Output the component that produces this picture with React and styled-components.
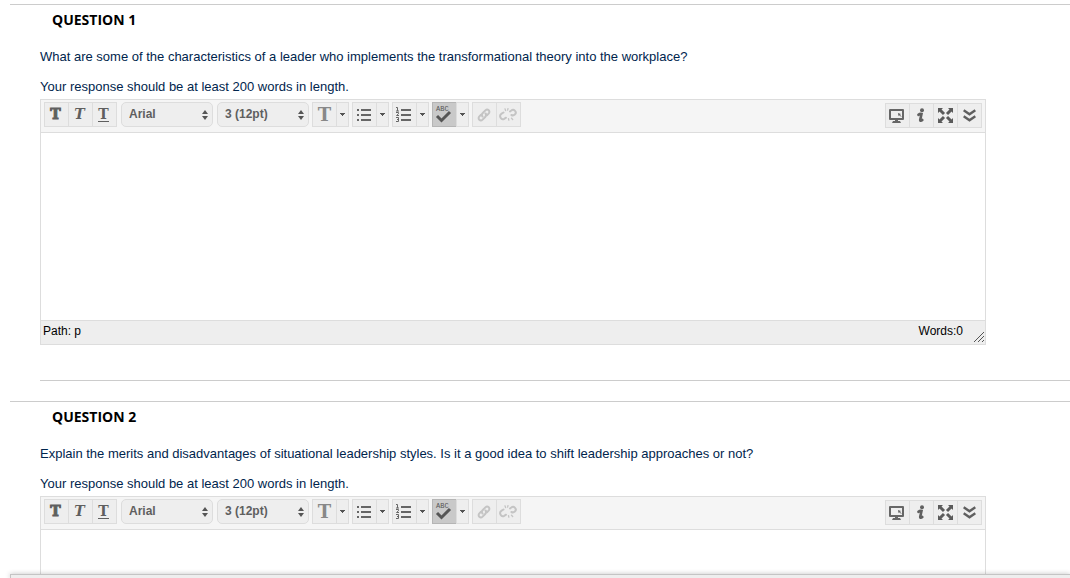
import React, { useState } from 'react';
import styled, { createGlobalStyle } from 'styled-components';

const GlobalStyle = createGlobalStyle`
    * {
        box-sizing: border-box;
    }

    html, body {
        margin: 0;
        height: 100%;
        overflow: hidden;
        background: #FFFFFF;
    }

    body {
        font-family: "Liberation Sans", Arial, sans-serif;
        font-size: 13px;
        color: #00254D;
    }
`

const questions = [
  {
    id: 1,
    text: 'What are some of the characteristics of a leader who implements the transformational theory into the workplace?',
  },
  {
    id: 2,
    text: 'Explain the merits and disadvantages of situational leadership styles. Is it a good idea to shift leadership approaches or not?',
  },
];

const hint = 'Your response should be at least 200 words in length.';

const Caret = () => (
  <svg width="5" height="3" viewBox="0 0 5 3">
    <path d="M0 0h5v1h-1v1h-1v1h-1v-1h-1v-1h-1z" fill="#555555" />
  </svg>
);

const BulletIcon = () => (
  <svg width="14" height="13" viewBox="0 0 14 13" fill="#666666">
    <path d="M0 1h2v2H0zM0 6h2v2H0zM0 11h2v2H0zM4 1h10v2H4zM4 6h10v2H4zM4 11h10v2H4z" />
  </svg>
);

const NumberIcon = () => (
  <svg width="15" height="15" viewBox="0 0 15 15" fill="none" stroke="#666666">
    <path d="M5 3h10M5 8h10M5 13h10" strokeWidth="2" />
    <path d="M0 .5h1.5V4M0 4h3M0 5.5h2.500v1.200L.5 8.500H3M0 10.500h2.500v4H0M1 12.500h1.500" strokeWidth="1" />
  </svg>
);

const SpellIcon = () => (
  <svg width="17" height="19" viewBox="0 0 17 19">
    <text x="1" y="6" fontFamily="Liberation Mono, monospace" fontSize="7" fill="#555555">ABC</text>
    <path d="M2 11l4.500 4.500L15 7" fill="none" stroke="#555555" strokeWidth="3" />
  </svg>
);

const LinkIcon = () => (
  <svg width="14" height="14" viewBox="0 0 14 14" fill="none" stroke="#C4C4C4" strokeWidth="2" strokeLinecap="round">
    <path d="M5.500 8.500C4.600 7.400 4.800 6 5.800 5l2.600-2.600c1-1 2.400-1 3.300-.1s.9 2.300-.1 3.300L10 7.200" />
    <path d="M8.500 5.500c.9 1.100.7 2.500-.3 3.500l-2.600 2.600c-1 1-2.400 1-3.300.1s-.9-2.300.1-3.300L4 6.800" />
  </svg>
);

const UnlinkIcon = () => (
  <svg width="18" height="14" viewBox="0 0 18 14" fill="none" stroke="#C4C4C4" strokeWidth="2" strokeLinecap="round">
    <path d="M4.500 4.500L2.600 5.700C1.200 6.600.8 8.400 1.600 9.800s2.300 1.700 3.600 1L7 9.700" />
    <path d="M11 3.500l1.300-1c1.100-.9 2.700-.8 3.700.3s.9 2.800-.2 3.800c-.9.8-2.200 1-3.400.4" />
    <path d="M6 .8l.6 1.800M9 .6l-.4 1.600M9.500 10.600l.3 1.600M12.500 10.300l1.200 1.200" strokeWidth="1.300" />
  </svg>
);

const MonitorIcon = () => (
  <svg width="15" height="14" viewBox="0 0 15 14">
    <path d="M1 1h13v9H1z" fill="none" stroke="#666666" strokeWidth="2" strokeLinejoin="round" />
    <path d="M9 4l3 1-1 .7 1.500 1.800V8L10 6.300l-.6.9zM6 10h3v2h2l1 2H3l1-2h2z" fill="#666666" />
  </svg>
);

const InfoIcon = () => (
  <svg width="8" height="15" viewBox="0 0 8 15">
    <circle cx="5" cy="2.200" r="2" fill="#606060" />
    <path d="M1.500 6.800c1-.9 2-1.200 3-.9L3.200 12c0 1.200 1 .9 2.100 0" fill="none" stroke="#606060" strokeWidth="2.600" strokeLinecap="round" />
  </svg>
);

const ExpandIcon = () => (
  <svg width="15" height="15" viewBox="0 0 15 15">
    <path d="M0 0h5L0 5zM15 0v5l-5-5zM0 15v-5l5 5zM15 15h-5l5-5z" fill="#5A5A5A" />
    <path d="M2 2l4 4M13 2L9 6M2 13l4-4M13 13L9 9" stroke="#5A5A5A" strokeWidth="3" />
  </svg>
);

const ChevronsIcon = () => (
  <svg width="13" height="13" viewBox="0 0 13 13" fill="none" stroke="#5F5F5F" strokeWidth="2.400">
    <path d="M.7 1.200l5.800 4 5.800-4M.7 7.200l5.800 4 5.800-4" />
  </svg>
);

const SelectArrows = () => (
  <svg width="6" height="10" viewBox="0 0 6 10" fill="#555555">
    <path d="M3 0l3 4H0zM3 10L0 6h6z" />
  </svg>
);

const Question = ({ id, text }) => {
  const [answer, setAnswer] = useState('');
  const [font, setFont] = useState('Arial');
  const [size, setSize] = useState('3 (12pt)');

  const words = answer.split(/\s+/).filter(Boolean).length;

  return (
    <QuestionSection>
      <QuestionTitle>QUESTION {id}</QuestionTitle>
      <QuestionBody>
        <QuestionText>{text}</QuestionText>
        <QuestionText>{hint}</QuestionText>
        <Editor>
          <Toolbar>
            <ToolGroup $spaced>
              <ToolButton type="button" aria-label="Bold"><Letter>T</Letter></ToolButton>
              <ToolButton type="button" aria-label="Italic"><Letter $italic>T</Letter></ToolButton>
              <ToolButton type="button" aria-label="Underline"><Letter $underline>T</Letter></ToolButton>
            </ToolGroup>
            <SelectBox>
              <Select aria-label="Font" value={font} onChange={(e) => setFont(e.target.value)}>
                <option value="Arial">Arial</option>
                <option value="Georgia">Georgia</option>
              </Select>
              <SelectArrows />
            </SelectBox>
            <SelectBox>
              <Select aria-label="Font size" value={size} onChange={(e) => setSize(e.target.value)}>
                <option value="3 (12pt)">3 (12pt)</option>
                <option value="4 (14pt)">4 (14pt)</option>
              </Select>
              <SelectArrows />
            </SelectBox>
            <ToolGroup>
              <ToolButton type="button" aria-label="Text color" $centered><Letter $large>T</Letter></ToolButton>
              <ToolButton type="button" aria-label="Choose text color" $narrow><Caret /></ToolButton>
            </ToolGroup>
            <ToolGroup>
              <ToolButton type="button" aria-label="Bulleted list"><BulletIcon /></ToolButton>
              <ToolButton type="button" aria-label="Bulleted list options" $narrow><Caret /></ToolButton>
            </ToolGroup>
            <ToolGroup>
              <ToolButton type="button" aria-label="Numbered list"><NumberIcon /></ToolButton>
              <ToolButton type="button" aria-label="Numbered list options" $narrow><Caret /></ToolButton>
            </ToolGroup>
            <ToolGroup>
              <ToolButton type="button" aria-label="Spell check" $active><SpellIcon /></ToolButton>
              <ToolButton type="button" aria-label="Spell check language" $narrow><Caret /></ToolButton>
            </ToolGroup>
            <ToolGroup>
              <ToolButton type="button" aria-label="Insert link" disabled><LinkIcon /></ToolButton>
              <ToolButton type="button" aria-label="Remove link" disabled><UnlinkIcon /></ToolButton>
            </ToolGroup>
            <RightTools>
              <ToolButton type="button" aria-label="Preview"><MonitorIcon /></ToolButton>
              <ToolButton type="button" aria-label="Help"><InfoIcon /></ToolButton>
              <ToolButton type="button" aria-label="Full screen" $centered><ExpandIcon /></ToolButton>
              <ToolButton type="button" aria-label="Show more" $centered><ChevronsIcon /></ToolButton>
            </RightTools>
          </Toolbar>
          <Answer
            aria-label={`Answer to question ${id}`}
            value={answer}
            onChange={(e) => setAnswer(e.target.value)}
          />
          <StatusBar>
            <span>Path: p</span>
            <WordCount>Words:{words}</WordCount>
            <Grip width="10" height="10" viewBox="0 0 10 10">
              <path d="M0 10L10 0M4 10l6-6M8 10l2-2" stroke="#555555" />
            </Grip>
          </StatusBar>
        </Editor>
        <Divider />
      </QuestionBody>
    </QuestionSection>
  );
};

const App = () => {
  return (
    <>
      <GlobalStyle />
      <Page>
        {questions.map((q) => (
          <Question key={q.id} id={q.id} text={q.text} />
        ))}
      </Page>
      <BottomBar />
    </>
  );
};

const Page = styled.main`
    height: 100vh;
    overflow: hidden;
    padding: 4px 0 0 10px;
`

const QuestionSection = styled.section`
    border-top: 1px solid #CCCCCC;
    padding-bottom: 20px;
`

const QuestionTitle = styled.h3`
    margin: 0;
    padding: 5px 0 0 42px;
    font-family: "Open Sans", sans-serif;
    font-size: 14px;
    font-weight: 700;
    line-height: 20px;
    color: #000000;
`

const QuestionBody = styled.div`
    padding: 19px 0 0 30px;
`

const QuestionText = styled.p`
    margin: 0 0 14px;
    line-height: 16px;

    & + & {
        margin-bottom: 4px;
    }
`

const Editor = styled.div`
    margin-right: 84px;
    border: 1px solid #DDDDDD;
`

const Toolbar = styled.div`
    display: flex;
    align-items: flex-start;
    gap: 3px;
    height: 33px;
    padding: 2px 3px 0;
    background: #F5F5F5;
    border-bottom: 1px solid #DDDDDD;
`

const ToolGroup = styled.div`
    display: flex;
    margin-right: ${(props) => (props.$spaced ? '1px' : '0')};
`

const RightTools = styled(ToolGroup)`
    margin-left: auto;
    margin-top: 1px;
`

const ToolButton = styled.button`
    display: flex;
    align-items: center;
    justify-content: center;
    width: ${(props) => (props.$narrow ? '13px' : '25px')};
    height: 25px;
    padding: ${(props) => (props.$narrow || props.$centered ? '0' : '0 2px 0 0')};
    border: 1px solid ${(props) => (props.$active ? '#B5B5B5' : '#DDDDDD')};
    border-radius: 0;
    background: ${(props) => (props.$active ? '#C9C9C9' : '#EEEEEE')};
    cursor: pointer;

    & + & {
        margin-left: -1px;
    }

    svg {
        display: block;
        flex: none;
    }
`

const Letter = styled.span`
    font-family: "DejaVu Serif", serif;
    font-size: ${(props) => (props.$large ? '18px' : '14px')};
    line-height: ${(props) => (props.$underline ? '14px' : '17px')};
    font-weight: 700;
    font-style: ${(props) => (props.$italic ? 'italic' : 'normal')};
    color: ${(props) => (props.$large ? '#888888' : '#5F5F5F')};
    -webkit-text-stroke: ${(props) => (props.$italic || props.$underline || props.$large ? '0' : '1px')};
    border-bottom: ${(props) => (props.$underline ? '1px solid #5F5F5F' : 'none')};
`

const SelectBox = styled.div`
    display: grid;
    align-items: center;
    width: 92px;
    height: 25px;
    margin-right: 1px;

    & + & {
        margin-right: 0;
    }

    svg {
        grid-area: 1 / 1;
        justify-self: end;
        margin-right: 5px;
        pointer-events: none;
    }
`

const Select = styled.select`
    grid-area: 1 / 1;
    width: 100%;
    height: 25px;
    padding: 0 8px 2px 7px;
    appearance: none;
    border: 1px solid #DDDDDD;
    border-radius: 5px;
    background: #EEEEEE;
    font-family: "Liberation Sans", Arial, sans-serif;
    font-size: 12px;
    font-weight: 700;
    color: #5F5F5F;
`

const Answer = styled.textarea`
    display: block;
    width: 100%;
    height: 187px;
    padding: 8px;
    border: none;
    outline: none;
    resize: none;
    background: #FFFFFF;
    font-family: "Liberation Sans", Arial, sans-serif;
    font-size: 16px;
`

const StatusBar = styled.div`
    display: flex;
    height: 24px;
    padding: 2px 1px 0 2px;
    border-top: 1px solid #DDDDDD;
    background: #EEEEEE;
    font-size: 12px;
    line-height: 16px;
    color: #000000;
`

const WordCount = styled.span`
    margin-left: auto;
    margin-right: 11px;
`

const Grip = styled.svg`
    align-self: flex-end;
    margin-bottom: 2px;
`

const Divider = styled.hr`
    margin: 35px 0 0;
    border: none;
    border-top: 1px solid #CCCCCC;
`

const BottomBar = styled.footer`
    position: fixed;
    left: 10px;
    right: 0;
    bottom: 0;
    height: 4px;
    border: 1px solid #C4C4C4;
    border-width: 1px 0 0 1px;
    background: #EEEEEE;
    box-shadow: 0 0 5px rgba(0, 0, 0, 0.25);
`

export default App;
